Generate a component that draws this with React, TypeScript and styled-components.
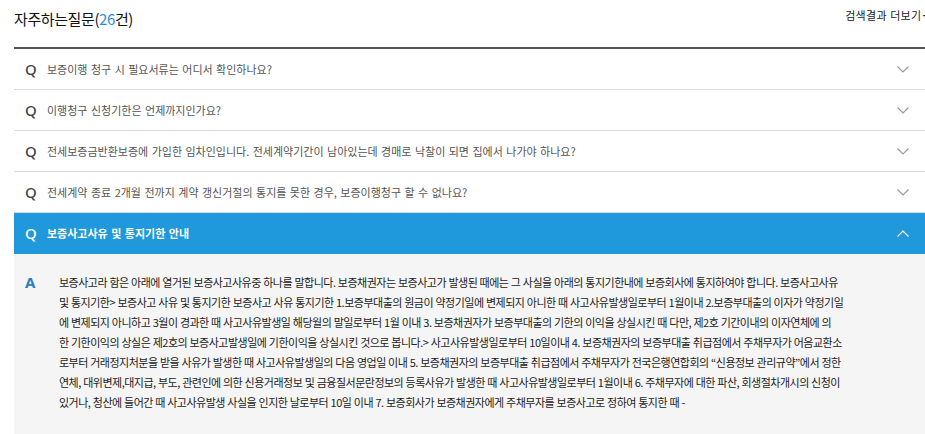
import styled, { createGlobalStyle } from 'styled-components';

const GlobalStyle = createGlobalStyle`
  html, body {
    margin: 0;
    padding: 0;
    background: #fff;
    overflow: hidden;
  }
  body {
    font-family: "Noto Sans CJK KR", "Noto Sans", sans-serif;
    color: #222;
  }
`;

const Page = styled.div`
  width: 911px;
  margin-left: 14px;
`;

const Header = styled.div`
  display: flex;
  justify-content: space-between;
  align-items: center;
  height: 36px;
  margin-bottom: 11px;
`;

const Title = styled.h2`
  margin: 0;
  font-size: 15px;
  font-weight: 400;
  letter-spacing: -0.4px;
  color: #111;
`;

const Count = styled.span`
  color: #2b8ed8;
`;

const MoreLink = styled.a`
  display: flex;
  align-items: center;
  gap: 1px;
  font-size: 11px;
  letter-spacing: 0.3px;
  word-spacing: 0.5px;
  color: #222;
  text-decoration: none;
  margin-right: -5px;
  margin-top: -6px;
  white-space: nowrap;
`;

const Plus = styled.span`
  font-family: "Liberation Sans", sans-serif;
  font-size: 13px;
  font-weight: 700;
  letter-spacing: 0;
`;

const List = styled.div`
  border-top: 2px solid #555;
`;

const Row = styled.div<{ $open?: boolean }>`
  display: flex;
  align-items: center;
  height: 40px;
  padding: 0 16px 0 11px;
  background: ${({ $open }) => ($open ? '#1f98dc' : '#fff')};
  border-bottom: 1px solid ${({ $open }) => ($open ? '#1f98dc' : '#dcdcdc')};
  color: ${({ $open }) => ($open ? '#fff' : '#555')};
`;

const Mark = styled.span<{ $answer?: boolean }>`
  flex: none;
  width: ${({ $answer }) => ($answer ? '34px' : '22px')};
  font-family: "Noto Sans", sans-serif;
  font-size: 15px;
  font-weight: ${({ $answer }) => ($answer ? 700 : 500)};
  color: ${({ $answer }) => ($answer ? '#2a7dc0' : 'inherit')};
  line-height: 20px;
`;

const QMark = styled(Mark)<{ $open?: boolean }>`
  color: ${({ $open }) => ($open ? '#fff' : '#444')};
`;

const Question = styled.span<{ $open?: boolean }>`
  flex: 1;
  font-size: 11px;
  letter-spacing: 0;
  word-spacing: 1px;
  font-weight: ${({ $open }) => ($open ? 700 : 400)};
  white-space: nowrap;
`;

const Chevron = ({ up }: { up?: boolean }) => (
  <svg width="12" height="7" viewBox="0 0 12 7" fill="none">
    <path
      d={up ? 'M0.5 6.5 L6 1 L11.5 6.5' : 'M0.5 0.5 L6 6 L11.5 0.5'}
      stroke={up ? '#fff' : '#9a9a9a'}
      strokeWidth="1.2"
    />
  </svg>
);

const Answer = styled.div`
  display: flex;
  align-items: flex-start;
  background: #f5f5f5;
  padding: 18px 17px 40px 11px;
`;

const AnswerText = styled.div`
  font-size: 11px;
  letter-spacing: -0.5px;
  word-spacing: 0.4px;
  line-height: 20px;
  color: #222;
`;

const Line = styled.span`
  display: block;
  white-space: nowrap;
`;

const questions = [
  '보증이행 청구 시 필요서류는 어디서 확인하나요?',
  '이행청구 신청기한은 언제까지인가요?',
  '전세보증금반환보증에 가입한 임차인입니다. 전세계약기간이 남아있는데 경매로 낙찰이 되면 집에서 나가야 하나요?',
  '전세계약 종료 2개월 전까지 계약 갱신거절의 통지를 못한 경우, 보증이행청구 할 수 없나요?',
];

const answerLines = [
  '보증사고라 함은 아래에 열거된 보증사고사유중 하나를 말합니다. 보증채권자는 보증사고가 발생된 때에는 그 사실을 아래의 통지기한내에 보증회사에 통지하여야 합니다. 보증사고사유',
  '및 통지기한> 보증사고 사유 및 통지기한 보증사고 사유 통지기한 1.보증부대출의 원금이 약정기일에 변제되지 아니한 때 사고사유발생일로부터 1월이내 2.보증부대출의 이자가 약정기일',
  '에 변제되지 아니하고 3월이 경과한 때 사고사유발생일 해당월의 말일로부터 1월 이내 3. 보증채권자가 보증부대출의 기한의 이익을 상실시킨 때 다만, 제2호 기간이내의 이자연체에 의',
  '한 기한이익의 상실은 제2호의 보증사고발생일에 기한이익을 상실시킨 것으로 봅니다.> 사고사유발생일로부터 10일이내 4. 보증채권자의 보증부대출 취급점에서 주채무자가 어음교환소',
  '로부터 거래정지처분을 받을 사유가 발생한 때 사고사유발생일의 다음 영업일 이내 5. 보증채권자의 보증부대출 취급점에서 주채무자가 전국은행연합회의 “신용정보 관리규약”에서 정한',
  '연체, 대위변제,대지급, 부도, 관련인에 의한 신용거래정보 및 금융질서문란정보의 등록사유가 발생한 때 사고사유발생일로부터 1월이내 6. 주채무자에 대한 파산, 회생절차개시의 신청이',
  '있거나, 청산에 들어간 때 사고사유발생 사실을 인지한 날로부터 10일 이내 7. 보증회사가 보증채권자에게 주채무자를 보증사고로 정하여 통지한 때 -',
];

export default function App() {
  return (
    <>
      <GlobalStyle />
      <Page>
        <Header>
          <Title>
            자주하는질문(<Count>26</Count>건)
          </Title>
          <MoreLink href="#">
            검색결과 더보기<Plus>+</Plus>
          </MoreLink>
        </Header>
        <List>
          {questions.map((q) => (
            <Row key={q}>
              <QMark>Q</QMark>
              <Question>{q}</Question>
              <Chevron />
            </Row>
          ))}
          <Row $open>
            <QMark $open>Q</QMark>
            <Question $open>보증사고사유 및 통지기한 안내</Question>
            <Chevron up />
          </Row>
          <Answer>
            <Mark $answer>A</Mark>
            <AnswerText>
              {answerLines.map((l) => (
                <Line key={l}>{l}</Line>
              ))}
            </AnswerText>
          </Answer>
        </List>
      </Page>
    </>
  );
}
